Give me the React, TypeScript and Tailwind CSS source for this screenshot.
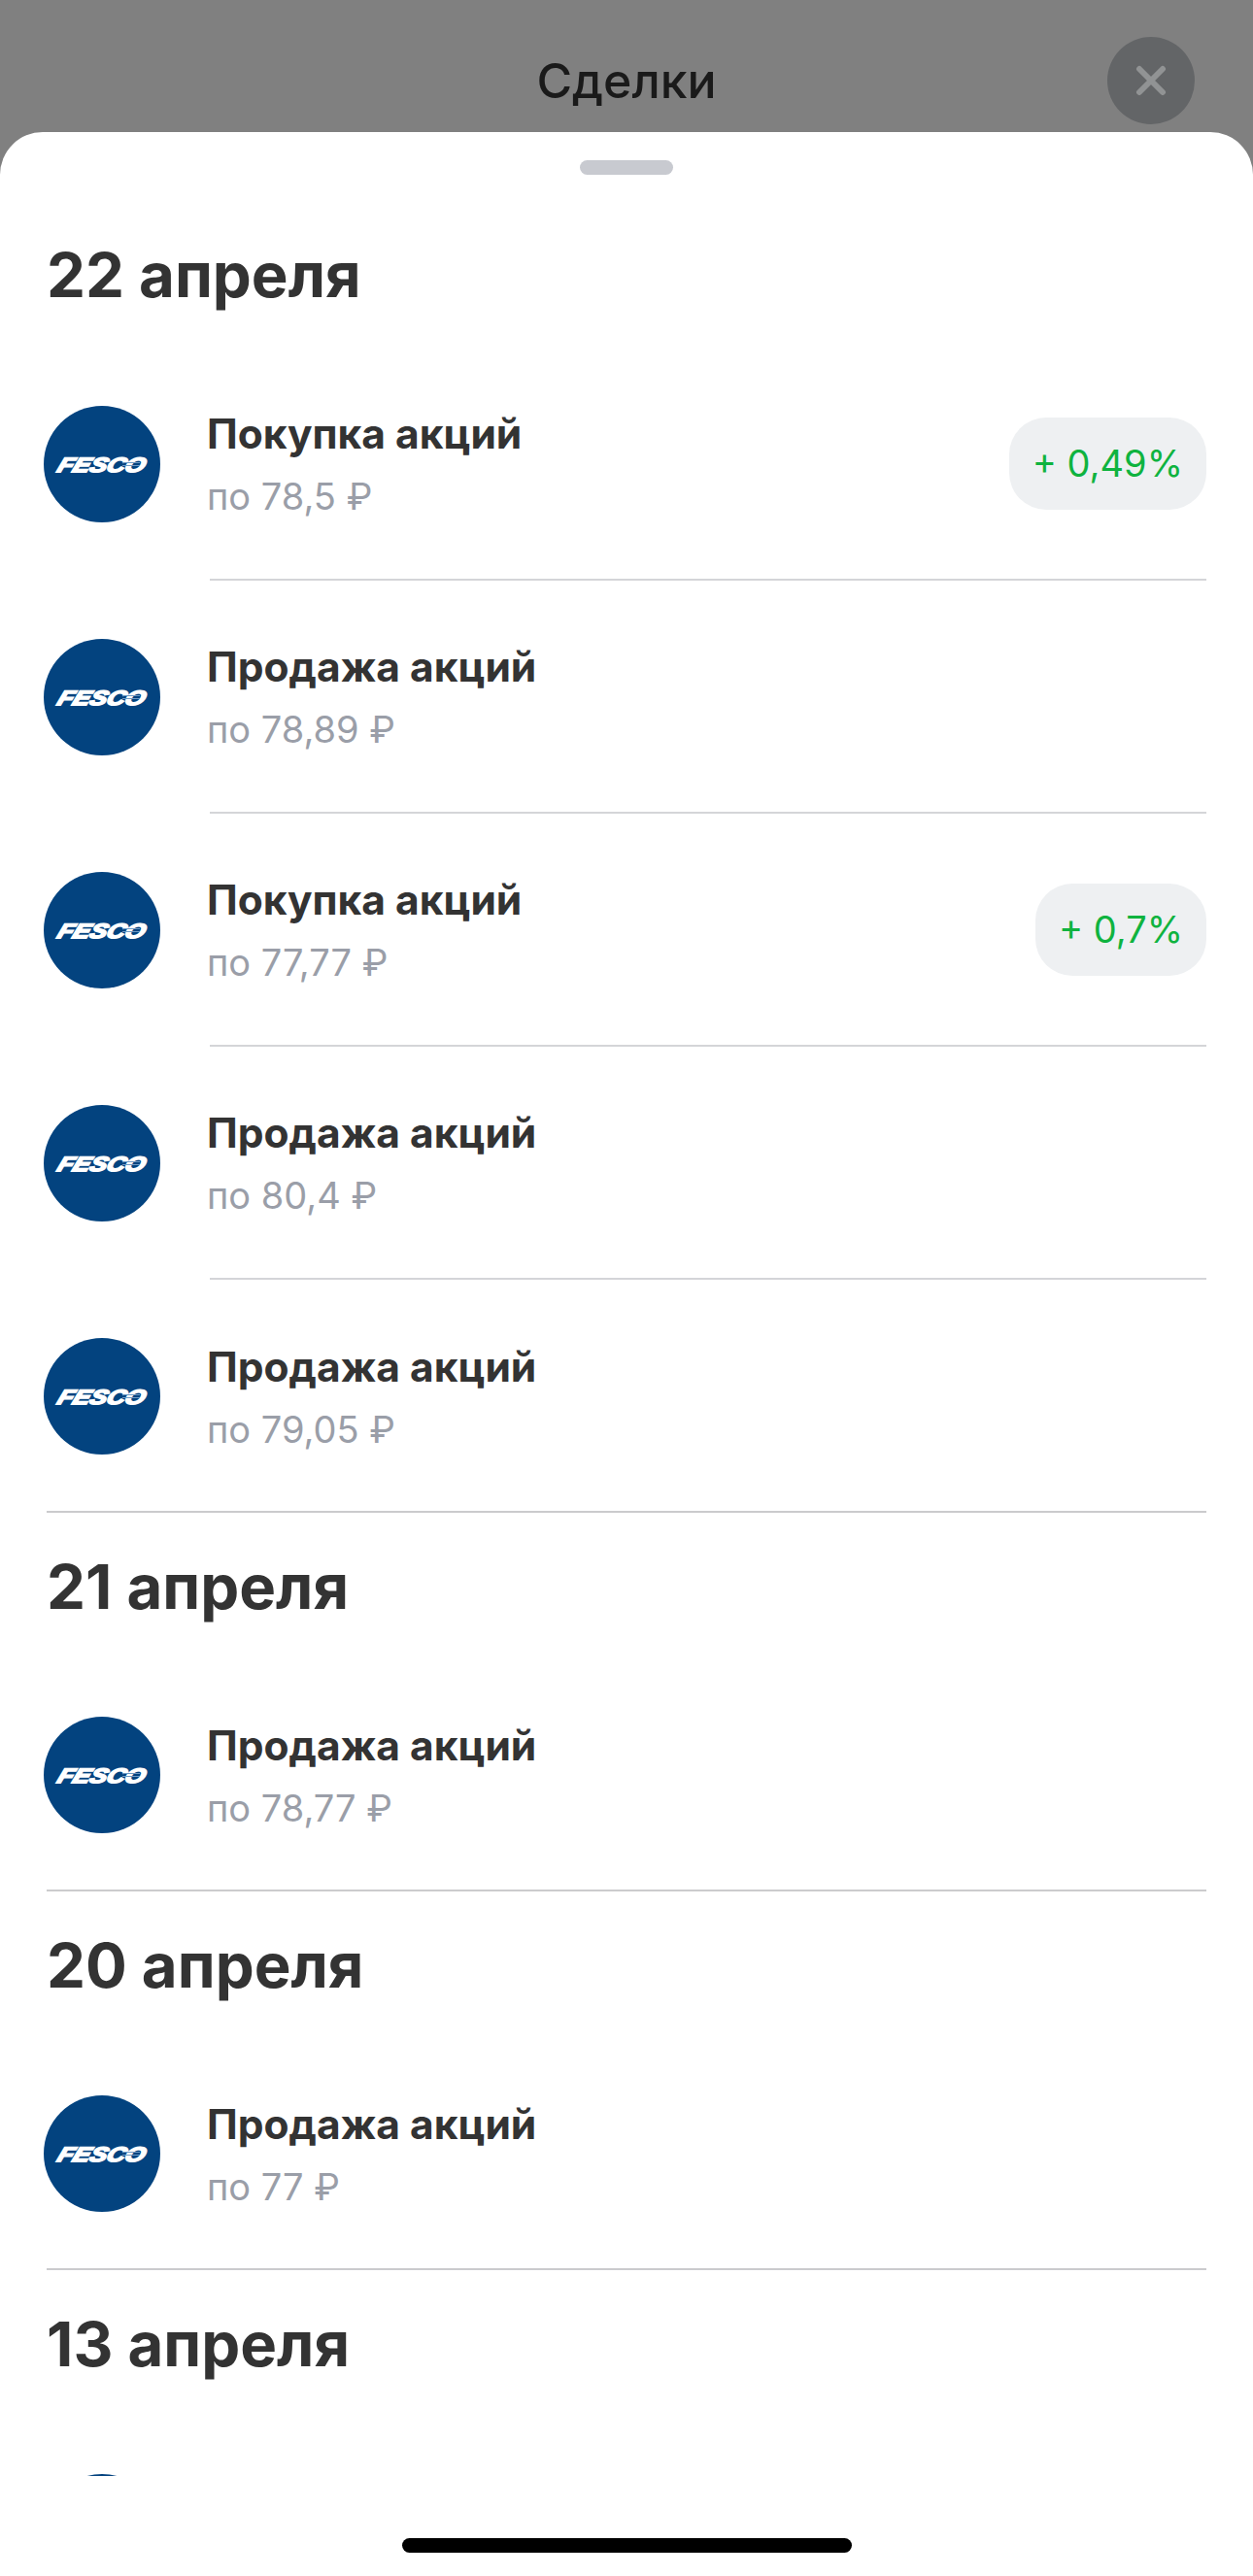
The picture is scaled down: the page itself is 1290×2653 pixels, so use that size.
const sections = [
  {
    date: '22 апреля',
    deals: [
      { title: 'Покупка акций', price: 'по 78,5 ₽', profit: '+ 0,49%' },
      { title: 'Продажа акций', price: 'по 78,89 ₽' },
      { title: 'Покупка акций', price: 'по 77,77 ₽', profit: '+ 0,7%' },
      { title: 'Продажа акций', price: 'по 80,4 ₽' },
      { title: 'Продажа акций', price: 'по 79,05 ₽' },
    ],
  },
  { date: '21 апреля', deals: [{ title: 'Продажа акций', price: 'по 78,77 ₽' }] },
  { date: '20 апреля', deals: [{ title: 'Продажа акций', price: 'по 77 ₽' }] },
  // only the top of the next row's logo shows above the bottom edge
  { date: '13 апреля', deals: [{ title: '', price: '' }] },
];

type Deal = { title: string; price: string; profit?: string };

function FescoLogo({ blank }: { blank: boolean }) {
  return (
    <div className="relative flex h-[120px] w-[120px] shrink-0 items-center justify-center rounded-full bg-[#03437f]">
      {!blank && (
        <>
          <span className="-skew-x-[16deg] scale-x-[1.24] text-[21px] font-bold italic leading-none text-white [-webkit-text-stroke:1.8px_white] [font-family:'Liberation_Sans',sans-serif]">
            FESCO
          </span>
          {/* small ship mark across the C and O */}
          <svg className="absolute left-[80px] top-[56px]" width="20" height="8" viewBox="0 0 20 8" fill="none" stroke="#6f9ac4" strokeWidth="1">
            <path d="M1 2.5h18M1 5.5h18" />
          </svg>
        </>
      )}
    </div>
  );
}

function DealRow({ deal, last }: { deal: Deal; last: boolean }) {
  return (
    <div className="flex h-[240px] pl-[45px] pr-12">
      <div className="flex h-full items-center">
        <FescoLogo blank={!deal.title} />
      </div>
      <div className={`ml-[51px] flex flex-1 items-center justify-between ${last ? '' : 'border-b-2 border-[#d4d5d8]'}`}>
        <div className="-ml-[3px] flex flex-col pt-[3px]">
          <span className="text-[42.5px] font-bold leading-[50px] text-[#333333]">{deal.title}</span>
          <span className="mt-[14px] text-[38px] leading-[50px] text-[#9a9ea8]">{deal.price}</span>
        </div>
        {deal.profit && (
          <span className="flex h-[95px] items-center rounded-[38px] bg-[#eef0f2] px-6 text-[38px] text-[#0fb33f]">
            {deal.profit}
          </span>
        )}
      </div>
    </div>
  );
}

export default function App() {
  return (
    <div className="flex h-[2653px] w-[1290px] flex-col overflow-hidden bg-[#808080] font-['Inter',sans-serif]">
      <header className="relative flex h-[136px] shrink-0 justify-center pt-[53px]">
        <h1 className="text-[50px] font-medium leading-[60px] text-[#1a1a1a]">Сделки</h1>
        <button className="absolute left-[1140px] top-[38px] flex h-[90px] w-[90px] items-center justify-center rounded-full bg-[#636567]">
          <svg width="32" height="32" viewBox="0 0 32 32" fill="none" stroke="#919394" strokeWidth="6" strokeLinecap="round">
            <path d="M4 4l24 24M28 4L4 28" />
          </svg>
        </button>
      </header>

      <div className="flex flex-1 flex-col overflow-hidden rounded-t-[44px] bg-white">
        <div className="flex shrink-0 justify-center pt-[29px]">
          <div className="h-[15px] w-[96px] rounded-full bg-[#c8cad0]" />
        </div>
        <div className="h-[2370px] shrink-0 overflow-hidden">
          {sections.map((section, i) => (
            <section key={section.date}>
              <h2 className={`pl-[48px] text-[63.5px] font-bold leading-[78px] text-[#333333] ${i === 0 ? 'pt-[64px]' : 'pt-[37px]'}`}>
                {section.date}
              </h2>
              <div className={i === 0 ? 'pt-[36px]' : 'pt-[35px]'}>
                {section.deals.map((deal, j) => (
                  <DealRow key={j} deal={deal} last={j === section.deals.length - 1} />
                ))}
              </div>
              <div className="mx-12 -mt-[2px] h-[2px] bg-[#cbcbcd]" />
            </section>
          ))}
        </div>
        <div className="flex flex-1 justify-center pt-[64px]">
          <div className="h-[15px] w-[463px] rounded-full bg-black" />
        </div>
      </div>
    </div>
  );
}
